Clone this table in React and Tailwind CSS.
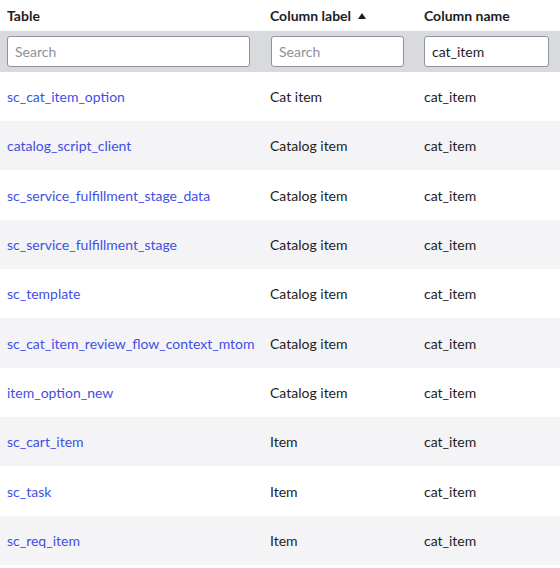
const rows = [
  ["sc_cat_item_option", "Cat item"],
  ["catalog_script_client", "Catalog item"],
  ["sc_service_fulfillment_stage_data", "Catalog item"],
  ["sc_service_fulfillment_stage", "Catalog item"],
  ["sc_template", "Catalog item"],
  ["sc_cat_item_review_flow_context_mtom", "Catalog item"],
  ["item_option_new", "Catalog item"],
  ["sc_cart_item", "Item"],
  ["sc_task", "Item"],
  ["sc_req_item", "Item"],
];

const cols = "grid grid-cols-[263px_154px_143px]";

export default function App() {
  return (
    <div
      className="w-[560px] h-[568px] overflow-hidden bg-white text-[14px] text-[#1d1d1f]"
      style={{ fontFamily: "Lato, 'Open Sans', sans-serif" }}
    >
      <div className={`${cols} h-[31px] items-center font-bold`}>
        <div className="pl-[7px]">Table</div>
        <div className="pl-[7px] flex items-center gap-[7px]">
          Column label
          <svg width="8" height="6" viewBox="0 0 8 6">
            <path d="M0 6 L4 0 L8 6 Z" fill="#1d1d1f" />
          </svg>
        </div>
        <div className="pl-[7px]">Column name</div>
      </div>

      <div className={`${cols} h-[41px] items-center bg-[#d9dadd]`}>
        <div className="pl-[7px]">
          <input
            className="w-[243px] h-[31px] px-[7px] bg-white border border-[#8f939a] rounded-[3px] placeholder:text-[#8e9196] outline-none"
            placeholder="Search"
          />
        </div>
        <div className="pl-[8px]">
          <input
            className="w-[133px] h-[31px] px-[7px] bg-white border border-[#8f939a] rounded-[3px] placeholder:text-[#8e9196] outline-none"
            placeholder="Search"
          />
        </div>
        <div className="pl-[7px]">
          <input
            className="w-[125px] h-[31px] px-[7px] bg-white border border-[#8f939a] rounded-[3px] text-[#1d1d1f] outline-none"
            defaultValue="cat_item"
          />
        </div>
      </div>

      {rows.map(([name, label], i) => (
        <div
          key={name}
          className={`${cols} items-center ${
            i % 3 === 2 ? "h-[50px]" : "h-[49px]"
          } ${i % 2 === 0 ? "bg-white" : "bg-[#f4f4f6]"}`}
        >
          <a href="#" className="pl-[7px] text-[#4150e4] whitespace-nowrap">
            {name}
          </a>
          <div className="pl-[7px]">{label}</div>
          <div className="pl-[7px]">cat_item</div>
        </div>
      ))}
    </div>
  );
}
